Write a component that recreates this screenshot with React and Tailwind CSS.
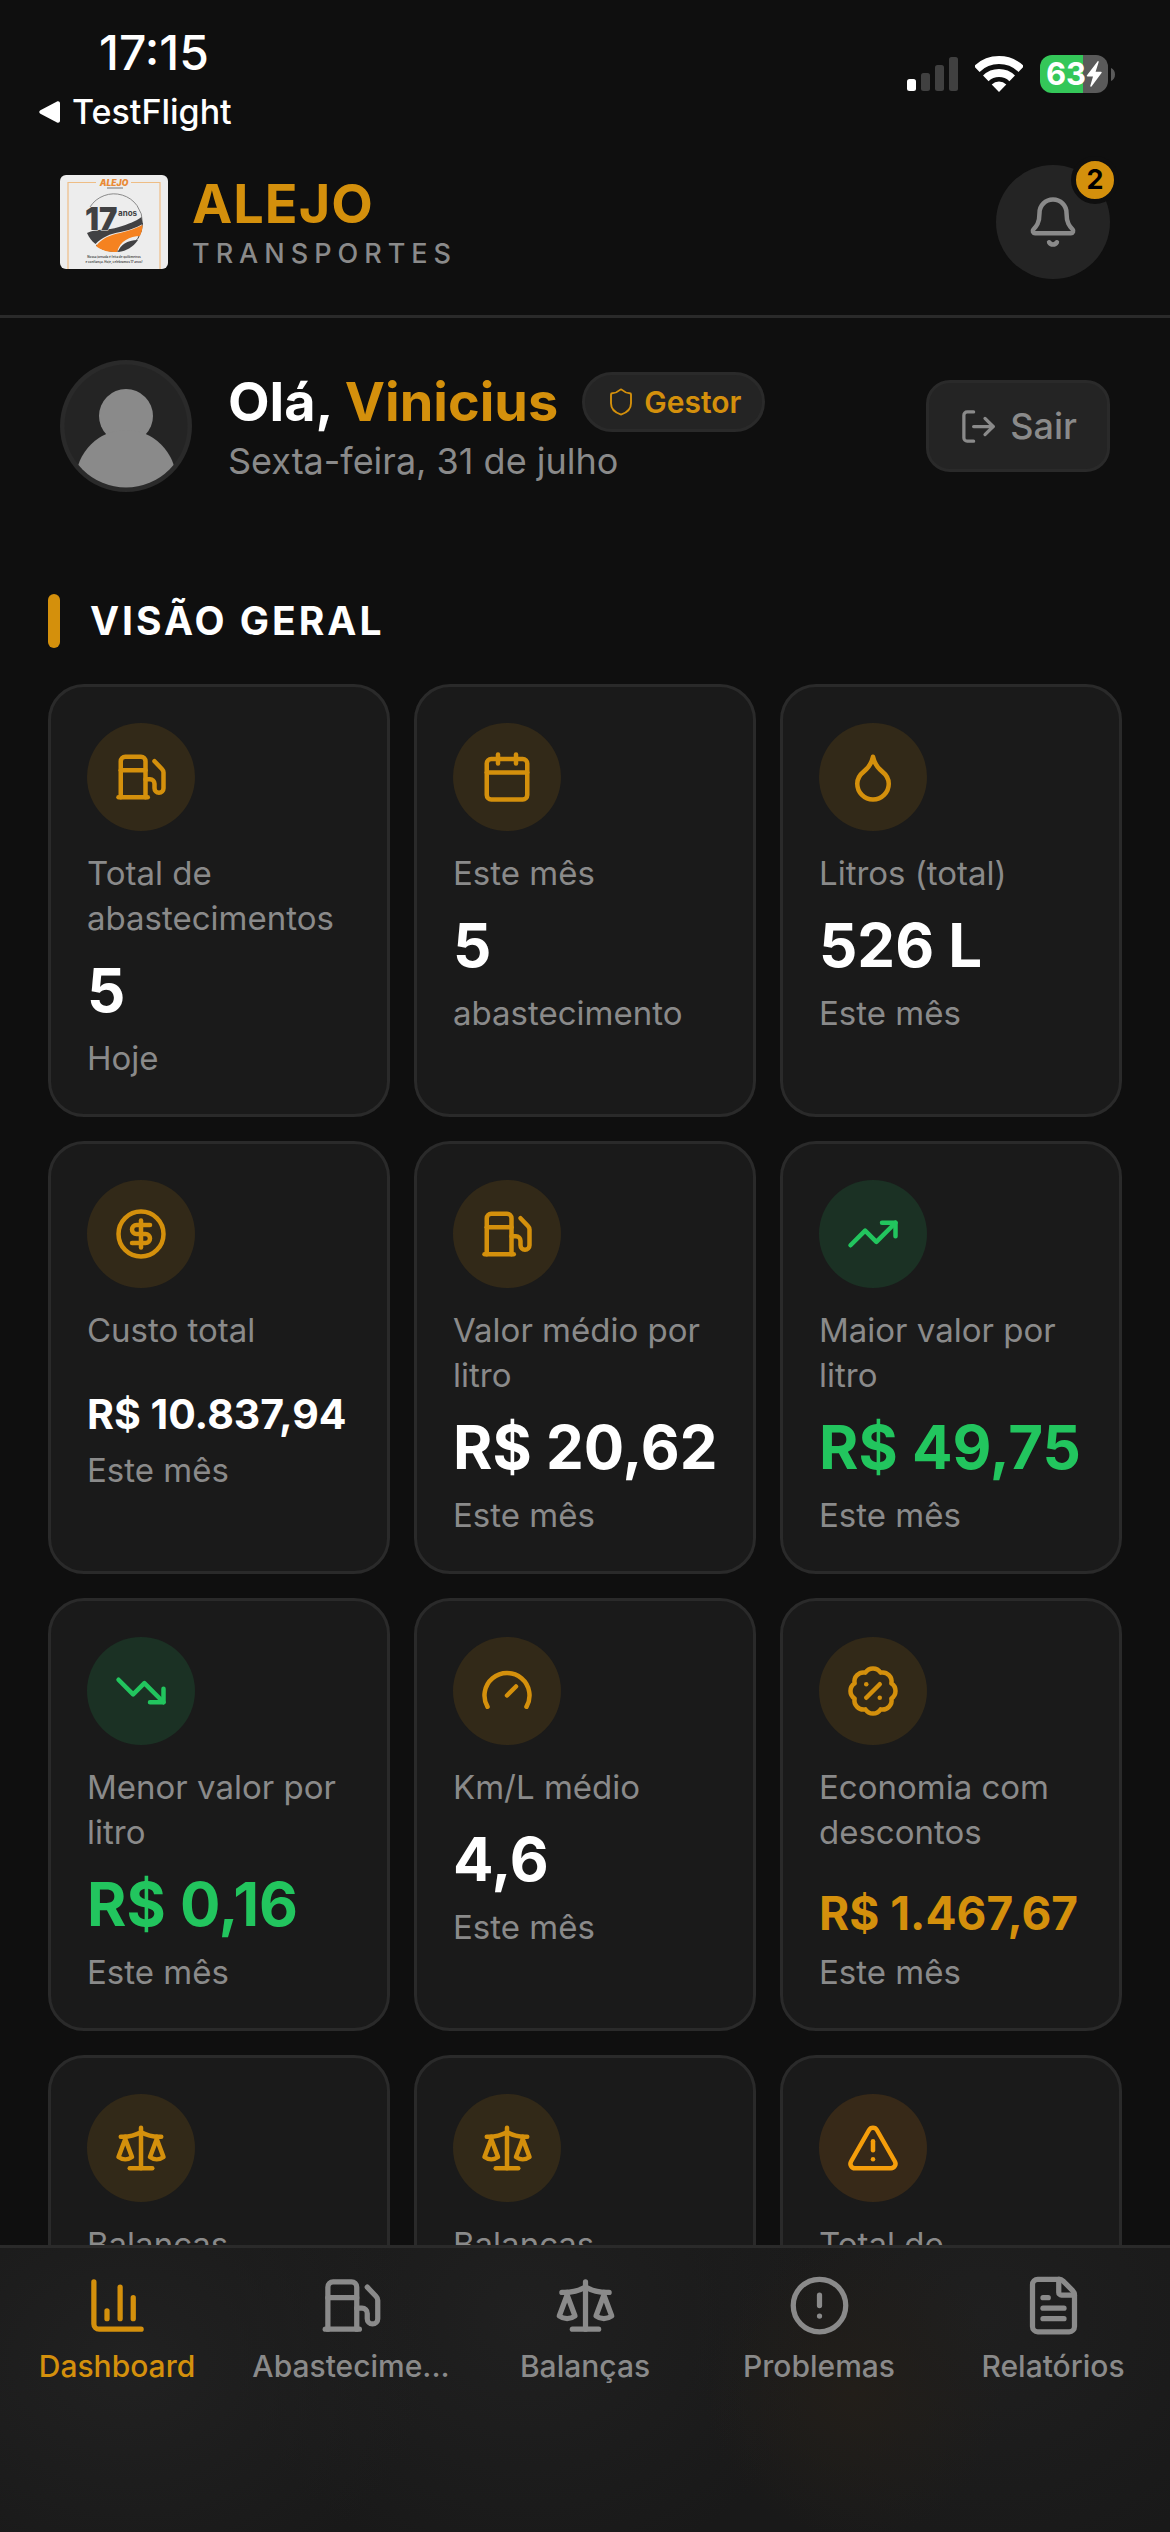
import {
  BadgePercent,
  Bell,
  Calendar,
  ChartColumn,
  CircleAlert,
  CircleDollarSign,
  Droplet,
  FileText,
  Fuel,
  Gauge,
  LogOut,
  Scale,
  Shield,
  TrendingDown,
  TrendingUp,
  TriangleAlert,
} from 'lucide-react'
import clsx from 'clsx'

const STATS = [
  { icon: Fuel, label: 'Total de abastecimentos', value: '5', hint: 'Hoje' },
  { icon: Calendar, label: 'Este mês', value: '5', hint: 'abastecimento' },
  { icon: Droplet, label: 'Litros (total)', value: '526 L', hint: 'Este mês' },
  { icon: CircleDollarSign, label: 'Custo total', value: 'R$ 10.837,94', size: 'sm', hint: 'Este mês' },
  { icon: Fuel, label: 'Valor médio por litro', value: 'R$ 20,62', hint: 'Este mês' },
  { icon: TrendingUp, tone: 'green', label: 'Maior valor por litro', value: 'R$ 49,75', valueColor: 'text-[#22c55e]', hint: 'Este mês' },
  { icon: TrendingDown, tone: 'green', label: 'Menor valor por litro', value: 'R$ 0,16', valueColor: 'text-[#22c55e]', hint: 'Este mês' },
  { icon: Gauge, label: 'Km/L médio', value: '4,6', hint: 'Este mês' },
  { icon: BadgePercent, label: 'Economia com descontos', value: 'R$ 1.467,67', size: 'md', valueColor: 'text-[#d4900c]', hint: 'Este mês' },
  { icon: Scale, label: 'Balanças' },
  { icon: Scale, label: 'Balanças' },
  { icon: TriangleAlert, tone: 'amber', label: 'Total de' },
]

const TONES = {
  gold: 'bg-[#322918] text-[#d4900c]',
  green: 'bg-[#1b3124] text-[#22c55e]',
  amber: 'bg-[#372918] text-[#f59e0b]',
}

const VALUE_SIZES = {
  sm: 'text-[41px] leading-[48px]',
  md: 'text-[46px] leading-[54px]',
  lg: 'text-[60px] leading-[72px]',
}

const TABS = [
  { icon: ChartColumn, label: 'Dashboard', active: true },
  { icon: Fuel, label: 'Abastecime...' },
  { icon: Scale, label: 'Balanças' },
  { icon: CircleAlert, label: 'Problemas' },
  { icon: FileText, label: 'Relatórios' },
]

function StatusBar() {
  return (
    <div className="flex justify-between pl-[39px] pr-[55px] pt-[26px] pb-[9px] text-white">
      <div>
        <div className="pl-[60px] text-[48px] leading-[54px] font-medium">17:15</div>
        <a href="#testflight" className="mt-3 flex items-center gap-3 text-[34px] leading-10 font-medium">
          <svg width="21" height="22" viewBox="0 0 21 22" fill="currentColor">
            <path d="M18 .6 1.4 9.2a2 2 0 0 0 0 3.6L18 21.4c1.5.7 3-.1 3-1.7V2.3C21 .7 19.5-.1 18 .6Z" />
          </svg>
          TestFlight
        </a>
      </div>
      <div className="mt-[29px] flex h-[38px] items-center">
        <svg width="51" height="34" viewBox="0 0 51 34">
          <rect x="0" y="22" width="9" height="12" rx="2.5" fill="#fff" />
          <rect x="14" y="16" width="9" height="18" rx="2.5" fill="#404040" />
          <rect x="28" y="8" width="9" height="26" rx="2.5" fill="#404040" />
          <rect x="42" y="0" width="9" height="34" rx="2.5" fill="#404040" />
        </svg>
        <svg width="48" height="36" viewBox="0 0 48 36" className="ml-[17px]">
          <path d="M1.8 13A32 32 0 0 1 46.2 13" fill="none" stroke="#fff" strokeWidth="8" />
          <path d="M10.8 22.3A19 19 0 0 1 37.2 22.3" fill="none" stroke="#fff" strokeWidth="8" />
          <path d="M24 36 16.7 28.5A10.5 10.5 0 0 1 31.3 28.5Z" fill="#fff" />
        </svg>
        <div className="ml-[17px] flex h-[38px] w-[68px] items-center justify-center rounded-[12px] bg-[linear-gradient(90deg,#34c759_63%,#5a5a5a_63%)] text-[31px] leading-[38px] font-bold">
          63
          <svg width="16" height="26" viewBox="0 0 16 26" fill="currentColor">
            <path d="M11.5.4 1 14.2c-.5.7-.2 1.3.6 1.3H7L4.3 24.7c-.3 1.100.6 1.500 1.200.7L15.500 12c.5-.7.200-1.300-.6-1.300H9.600L12.600 1.200c.3-1-.5-1.500-1.100-.8Z" />
          </svg>
        </div>
        <svg width="4" height="13" viewBox="0 0 4 13" className="ml-[3px]" fill="#5a5a5a">
          <path d="M0 0c2.5 1 4 3.5 4 6.500S2.500 12 0 13Z" />
        </svg>
      </div>
    </div>
  )
}

function CompanyLogo() {
  return (
    <svg width="108" height="94" viewBox="0 0 108 94" className="shrink-0 rounded-[6px] bg-[#ededed] font-['Inter',sans-serif]">
      <path d="M36 7.5H8V94M71 7.5h29V94" fill="none" stroke="#eebd85" strokeWidth="1.2" />
      <text x="54" y="10.5" fontSize="8.5" fontWeight="900" fontStyle="italic" textAnchor="middle" fill="#e98a35">ALEJO</text>
      <path d="M47 13h16" stroke="#777" strokeWidth="1" />
      <path d="M30 32A28.5 28.5 0 0 1 82.5 48" fill="none" stroke="#8a8a8a" strokeWidth="1" />
      <path d="M82.5 48A28.5 28.5 0 0 1 36 70" fill="none" stroke="#414143" strokeWidth="1" />
      <path d="M27 58c10-5 20-2 32-6 9-3 16-5 22.5-10l1 7c-7 4-13 6-22 8-11 2-18 5-25 12-4-3-6-6-8.500-11Z" fill="#414143" />
      <path d="M36 71c6-8 14-11 24-13 9-2 16-5 22.500-8 0 5-1 7-2.500 11-10 0-20 5-23 16-8 0-15-1-21-6Z" fill="#f58220" />
      <path d="M58 77c2-7 9-12 20-12-5 7-11 11-20 12Z" fill="#414143" />
      <text x="25" y="55" fontSize="31" fontWeight="900" fill="#414143" stroke="#ededed" strokeWidth="1" paintOrder="stroke">17</text>
      <text x="58" y="41" fontSize="8" fontWeight="700" fill="#414143">anos</text>
      <text x="54" y="83" fontSize="3" fontWeight="700" textAnchor="middle" fill="#555">Nossa jornada é feita de quilômetros</text>
      <text x="54" y="88" fontSize="3" fontWeight="700" textAnchor="middle" fill="#555">e confiança. Hoje, celebramos 17 anos!</text>
    </svg>
  )
}

function Avatar() {
  return (
    <svg width="132" height="132" viewBox="0 0 132 132" className="shrink-0">
      <defs>
        <clipPath id="avatar-clip">
          <circle cx="66" cy="66" r="61.5" />
        </clipPath>
      </defs>
      <circle cx="66" cy="66" r="66" fill="#2a2a2a" />
      <circle cx="66" cy="66" r="61.5" fill="#242424" />
      <g clipPath="url(#avatar-clip)" fill="#8a8a8a">
        <circle cx="66" cy="56" r="27" />
        <circle cx="66" cy="120" r="50" />
      </g>
    </svg>
  )
}

function Header() {
  return (
    <header className="flex items-center justify-between border-b-[3px] border-[#2a2a2a] px-[60px] pt-6 pb-9">
      <div className="flex items-center gap-6">
        <CompanyLogo />
        <div>
          <div className="text-[54px] leading-[64px] font-bold tracking-[1px] text-[#d4900c]">ALEJO</div>
          <div className="text-[27px] leading-9 font-medium tracking-[6px] text-[#8a8a8a]">TRANSPORTES</div>
        </div>
      </div>
      <button
        aria-label="Notificações"
        className="relative flex size-[114px] items-center justify-center rounded-full bg-[#242424] text-[#8a8a8a]"
      >
        <Bell size={54} />
        <span className="absolute -top-[9px] -right-[9px] flex size-12 items-center justify-center rounded-full border-[5px] border-[#0f0f0f] bg-[#d4900c] text-[27px] font-bold text-black">
          2
        </span>
      </button>
    </header>
  )
}

function Greeting() {
  return (
    <section className="flex items-center gap-9 px-[60px] pt-[42px]">
      <Avatar />
      <div className="flex flex-1 flex-col gap-1">
        <div className="flex items-center gap-6">
          <h1 className="text-[54px] leading-[66px] font-bold text-white">
            Olá, <span className="text-[#d4900c]">Vinicius</span>
          </h1>
          <span className="flex items-center gap-2 rounded-full border-[3px] border-[#2a2a2a] bg-[#242424] px-[21px] py-[9px] text-[30px] leading-9 font-semibold text-[#d4900c]">
            <Shield size={30} strokeWidth={1.5} />
            Gestor
          </span>
        </div>
        <p className="text-[36px] leading-[44px] text-[#8a8a8a]">Sexta-feira, 31 de julho</p>
      </div>
      <button className="flex items-center gap-3 rounded-[24px] border-[3px] border-[#2a2a2a] bg-[#242424] px-[30px] py-[21px] text-[36px] leading-[44px] font-medium text-[#8a8a8a]">
        <LogOut size={39} />
        Sair
      </button>
    </section>
  )
}

function StatCard({ icon: Icon, tone = 'gold', label, value, size = 'lg', valueColor = 'text-white', hint }) {
  return (
    <div className="rounded-[36px] border-[3px] border-[#2a2a2a] bg-[#1a1a1a] p-9 text-[33px] text-[#8a8a8a]">
      <div className={clsx('flex size-[108px] items-center justify-center rounded-full', TONES[tone])}>
        <Icon size={54} />
      </div>
      <p className="mt-5 leading-[45px]">{label}</p>
      {value && (
        // smaller values stay on the bottom edge of the slot
        <div className={clsx('mt-[13px] flex h-[72px] items-end font-bold whitespace-nowrap', VALUE_SIZES[size], valueColor)}>
          {value}
        </div>
      )}
      {hint && <p className="mt-3 leading-10">{hint}</p>}
    </div>
  )
}

function TabBar() {
  return (
    <nav className="grid grid-cols-5 border-t-[3px] border-[#2a2a2a] bg-[#191919] bg-[radial-gradient(150px_150px_at_73%_50%,#221e19_0%,transparent_100%),radial-gradient(300px_240px_at_11%_40%,#212121_0%,transparent_100%),radial-gradient(300px_260px_at_45%_25%,#202020_0%,transparent_100%),radial-gradient(300px_260px_at_84%_25%,#1f1f1f_0%,transparent_100%)] pt-[26px] pb-[148px]">
      {TABS.map(({ icon: Icon, label, active }) => (
        <button
          key={label}
          aria-current={active ? 'page' : undefined}
          className={clsx(
            'flex flex-col items-center gap-[11px] text-[30px] leading-9 font-medium',
            active ? 'text-[#d4900c]' : 'text-[#8a8a8a]'
          )}
        >
          <Icon size={63} />
          {label}
        </button>
      ))}
    </nav>
  )
}

export default function App() {
  return (
    <div className="flex h-screen flex-col overflow-hidden bg-[#0f0f0f] font-['Inter',sans-serif]">
      <StatusBar />
      <Header />
      <main className="min-h-0 flex-1 overflow-y-auto [scrollbar-width:none]">
        <Greeting />
        <section className="px-12 pt-[102px] pb-12">
          <div className="flex items-center gap-[30px]">
            <span className="h-[54px] w-3 rounded-full bg-[#d4900c]" />
            <h2 className="text-[39px] leading-[54px] font-bold tracking-[3px] text-white">VISÃO GERAL</h2>
          </div>
          <div className="mt-9 grid grid-cols-3 gap-6">
            {STATS.map((stat, i) => (
              <StatCard key={i} {...stat} />
            ))}
          </div>
        </section>
      </main>
      <TabBar />
    </div>
  )
}
